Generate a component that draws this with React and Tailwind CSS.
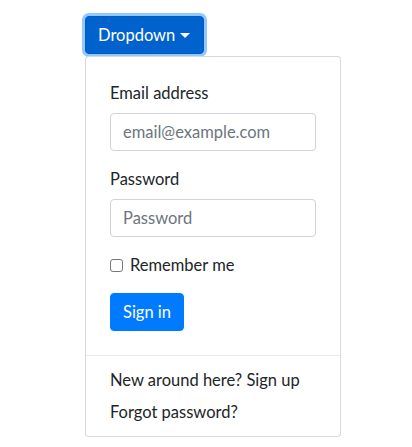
import React from "react";

const font = { fontFamily: "Lato, 'Noto Sans', sans-serif" };

export default function App() {
	return (
		<div
			className="min-h-screen bg-white pt-4 pl-[85px] text-[16px] leading-6 text-[#212529]"
			style={font}
		>
			{/* Toggle button */}
			<button className="flex items-center h-[38px] pl-3 pr-[13px] rounded border border-[#005cbf] bg-[#0062cc] text-white text-[16.5px] ring-[3px] ring-[rgba(38,143,255,0.5)]">
				Dropdown
				<span className="ml-[5px] mt-[1px] w-0 h-0 border-l-[5px] border-r-[5px] border-t-[5px] border-l-transparent border-r-transparent border-t-white" />
			</button>

			{/* Menu */}
			<div className="mt-[2px] w-[256px] py-2 rounded border border-[rgba(0,0,0,0.15)] bg-white">
				<form className="px-6 py-4" onSubmit={(e) => e.preventDefault()}>
					<div className="mb-4">
						<label className="block mb-2 text-[16.5px]">Email address</label>
						<input
							type="email"
							placeholder="email@example.com"
							className="block w-full h-[38px] px-3 rounded border border-[#ced4da] text-[16.5px] placeholder-[#6c757d] outline-none"
						/>
					</div>
					<div className="mb-4">
						<label className="block mb-2 text-[16.5px]">Password</label>
						<input
							type="password"
							placeholder="Password"
							className="block w-full h-[38px] px-3 rounded border border-[#ced4da] text-[16.5px] placeholder-[#6c757d] outline-none"
						/>
					</div>
					<div className="mb-4 flex items-center h-6">
						<span className="w-[13px] h-[13px] rounded-[3px] border border-[#767676] bg-white" />
						<span className="ml-[7px] text-[16.5px]">Remember me</span>
					</div>
					<button
						type="submit"
						className="h-[38px] px-3 rounded border border-[#007bff] bg-[#007bff] text-white text-[16.5px]"
					>
						Sign in
					</button>
				</form>
				<div className="my-2 border-t border-[#e9ecef]" />
				<a className="block px-6 py-1 text-[16.5px]">New around here? Sign up</a>
				<a className="block px-6 py-1 text-[16.5px]">Forgot password?</a>
			</div>
		</div>
	);
}
